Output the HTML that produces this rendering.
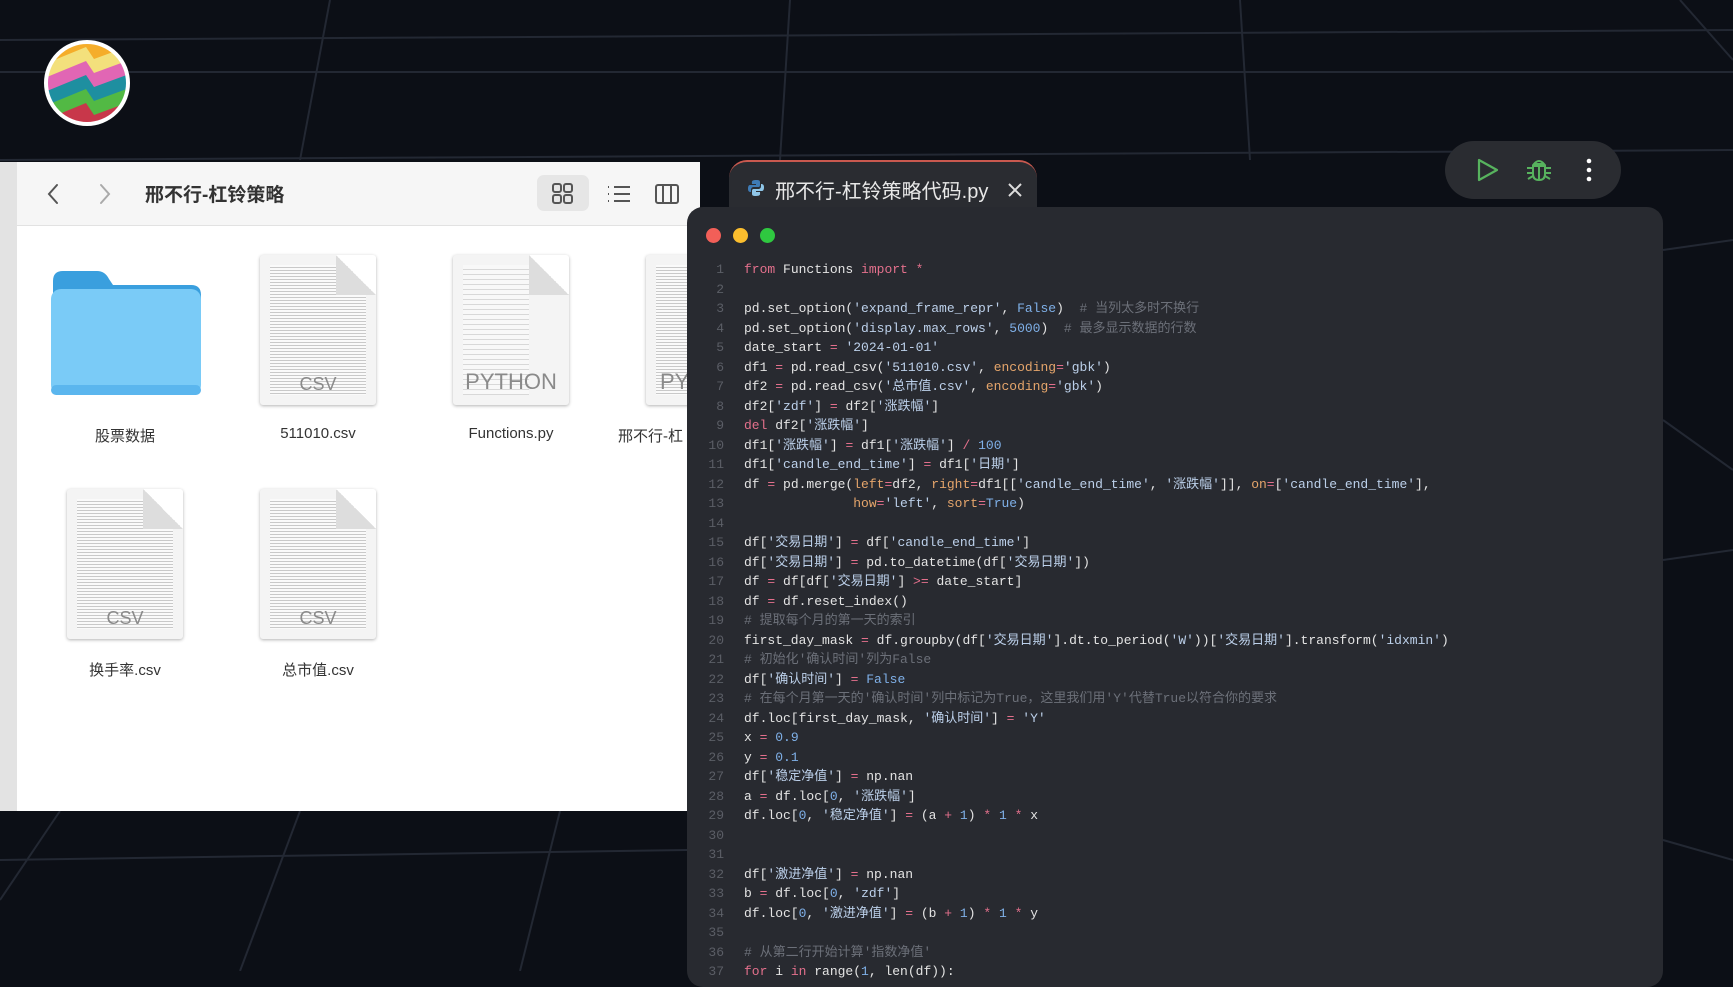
<!DOCTYPE html>
<html><head><meta charset="utf-8">
<style>
*{margin:0;padding:0;box-sizing:border-box}
body{width:1733px;height:971px;overflow:hidden;background:#0c0f16;position:relative;font-family:"Liberation Sans","Noto Sans CJK SC",sans-serif}
.bg{position:absolute;left:0;top:0}
.finder{position:absolute;left:0;top:162px;width:700px;height:649px;background:#fff;overflow:hidden}
.side{position:absolute;left:0;top:0;width:17px;height:100%;background:#e3e3e3}
.tb{position:absolute;left:17px;top:0;right:0;height:64px;background:#f6f6f6;border-bottom:1px solid #e2e2e2}
.tt{position:absolute;left:128px;top:18px;font-size:19px;font-weight:bold;color:#333}
.lbl{position:absolute;font-size:15px;color:#333;text-align:center;width:180px}
.doc{position:absolute;width:116px;height:150px;background:#f4f4f4;border-radius:3px;box-shadow:0 1px 3px rgba(0,0,0,.3);overflow:hidden}
.doc:after{content:"";position:absolute;right:0;top:0;width:40px;height:40px;background:linear-gradient(225deg,#fff 50%,#ddd 50%)}
.doc .lines{position:absolute;left:10px;top:10px;right:10px;bottom:10px;background:repeating-linear-gradient(#fafafa 0 2px,#c9c9c9 2px 3px)}
.doc .ext{position:absolute;bottom:10px;width:100%;text-align:center;font-size:18px;color:#8a8a8a}
.tab{position:absolute;left:729px;top:160px;width:308px;height:60px;background:#2a2c31;border-radius:18px 18px 0 0;border-top:2px solid #c9594f}
.tab span{position:absolute;left:46px;top:13px;font-size:20px;color:#e8e8e8}
.ed{position:absolute;left:687px;top:207px;width:976px;height:780px;background:#282a30;border-radius:16px}
.dot{position:absolute;top:228px;width:15px;height:15px;border-radius:50%}
pre{position:absolute;left:744px;top:260px;font-family:"Liberation Mono","Noto Sans CJK SC",monospace;font-size:13px;line-height:19.5px;color:#e4e4e4}
.ln{position:absolute;left:700px;top:260px;width:24px;text-align:right;font-family:"Liberation Mono",monospace;font-size:13px;line-height:19.5px;color:#5b5e66}
.k{color:#e3708c}.s{color:#bcd0ea}.n{color:#7fb0e8}.o{color:#e3708c}.a{color:#e5a56b}.c{color:#6c7079}
.pill{position:absolute;left:1445px;top:141px;width:176px;height:58px;background:#2a2c31;border-radius:29px}
</style></head><body>
<svg class="bg" width="1733" height="971" stroke="#232833" stroke-width="2" fill="none">
<path d="M0 72 L1733 72"/><path d="M0 160 L1733 150"/><path d="M0 40 L1733 30"/>
<path d="M330 0 L300 160"/><path d="M790 0 L780 160"/><path d="M1240 0 L1250 160"/><path d="M1680 0 L1733 60"/>
<path d="M0 860 L687 850"/><path d="M60 811 L0 900"/><path d="M300 811 L240 971"/><path d="M560 811 L520 971"/>
<path d="M1663 250 L1733 240"/><path d="M1663 560 L1733 550"/><path d="M1663 840 L1733 860"/><path d="M1663 420 L1733 470"/>
</svg>
<svg style="position:absolute;left:42px;top:39px" width="90" height="90" viewBox="0 0 90 90">
<defs><clipPath id="cc"><circle cx="45" cy="44" r="41"/></clipPath></defs>
<g clip-path="url(#cc)">
<rect width="90" height="90" fill="#f5ad2a"/>
<path d="M0 26L44 8L52 20L90 6V90H0Z" fill="#f3e07c"/>
<path d="M0 40L44 22L52 34L90 20V90H0Z" fill="#e166b4"/>
<path d="M0 54L44 36L52 48L90 34V90H0Z" fill="#1e8fa0"/>
<path d="M0 68L44 50L52 62L90 48V90H0Z" fill="#52b944"/>
<path d="M0 82L44 64L52 76L90 62V90H0Z" fill="#c8374a"/>
</g><circle cx="45" cy="44" r="41" fill="none" stroke="#fff" stroke-width="4"/></svg>

<div class="finder">
<div class="side"></div>
<div class="tb">
<svg style="position:absolute;left:27px;top:20px" width="70" height="24" stroke-width="2" fill="none" stroke-linecap="round"><path d="M13 3L5 12L13 21" stroke="#555"/><path d="M57 3L65 12L57 21" stroke="#aaa"/></svg>
<div class="tt">邢不行-杠铃策略</div>
<div style="position:absolute;left:520px;top:13px;width:52px;height:36px;background:#e6e6e6;border-radius:7px"></div>
<svg style="position:absolute;left:535px;top:21px" width="160" height="22" fill="none" stroke="#555" stroke-width="2"><rect x="1" y="1" width="8" height="8" rx="2"/><rect x="12" y="1" width="8" height="8" rx="2"/><rect x="1" y="12" width="8" height="8" rx="2"/><rect x="12" y="12" width="8" height="8" rx="2"/>
<path d="M62 4H78M62 11H78M62 18H78M56 4h1M56 11h1M56 18h1"/><rect x="104" y="2" width="22" height="18" rx="2"/><path d="M111 2V20M119 2V20"/><rect x="155" y="2" width="20" height="14" rx="2"/></svg>
</div>
<svg style="position:absolute;left:49px;top:105px" width="154" height="130"><path d="M4 14Q4 4 14 4H48Q56 4 60 12L64 18H142Q152 18 152 28V40H4Z" fill="#3a9fde"/><rect x="2" y="22" width="150" height="106" rx="10" fill="#7acbf7"/><rect x="2" y="118" width="150" height="10" rx="5" fill="#5bb6ee"/></svg>
<div class="lbl" style="left:35px;top:263px">股票数据</div>
<div class="doc" style="left:260px;top:93px"><div class="lines"></div><div class="ext">CSV</div></div>
<div class="lbl" style="left:228px;top:263px">511010.csv</div>
<div class="doc" style="left:453px;top:93px"><div class="lines" style="background:repeating-linear-gradient(#f8f8f8 0 4px,#d8d8d8 4px 5px);right:40px"></div><div class="ext" style="font-size:22px">PYTHON</div></div>
<div class="lbl" style="left:421px;top:263px">Functions.py</div>
<div class="doc" style="left:646px;top:93px"><div class="lines" style="right:0"></div><div class="ext" style="font-size:22px;text-align:left;padding-left:14px">PY</div></div>
<div class="lbl" style="left:600px;top:263px;text-align:left;padding-left:18px">邢不行-杠</div>
<div class="doc" style="left:67px;top:327px"><div class="lines"></div><div class="ext">CSV</div></div>
<div class="lbl" style="left:35px;top:497px">换手率.csv</div>
<div class="doc" style="left:260px;top:327px"><div class="lines"></div><div class="ext">CSV</div></div>
<div class="lbl" style="left:228px;top:497px">总市值.csv</div>
</div>

<div class="tab"><svg style="position:absolute;left:18px;top:17px" width="18" height="18" viewBox="0 0 18 18"><path d="M9 1C4 1 5 3 5 5H9V6H3C1 6 1 9 1 10C1 13 3 13 4 13V11C4 9 5 8 7 8H11C13 8 13 7 13 5V3C13 1 11 1 9 1Z" fill="#3e7bb6"/><path d="M9 17C14 17 13 15 13 13H9V12H15C17 12 17 9 17 8C17 5 15 5 14 5V7C14 9 13 10 11 10H7C5 10 5 11 5 13V15C5 17 7 17 9 17Z" fill="#8fc6e8"/></svg><span>邢不行-杠铃策略代码.py</span>
<svg style="position:absolute;left:278px;top:20px" width="16" height="16" stroke="#ddd" stroke-width="2"><path d="M2 2L14 14M14 2L2 14"/></svg></div>
<div class="ed"></div>
<div class="dot" style="left:706px;background:#f25f58"></div>
<div class="dot" style="left:733px;background:#fbbe2e"></div>
<div class="dot" style="left:760px;background:#2fc840"></div>
<div class="pill">
<svg style="position:absolute;left:30px;top:16px" width="26" height="26" fill="none" stroke="#57b35e" stroke-width="2.2" stroke-linejoin="round"><path d="M4 3L22 13L4 23Z"/></svg>
<svg style="position:absolute;left:80px;top:15px" width="28" height="28" fill="none" stroke="#57b35e" stroke-width="2"><path d="M9 8Q14 2 19 8Z M8 10H20V18Q20 24 14 24Q8 24 8 18Z M14 10V24M2 12H8M20 12H26M2 17H8M20 17H26M3 23L8 20M25 23L20 20"/></svg>
<svg style="position:absolute;left:140px;top:16px" width="8" height="26" fill="#fff"><circle cx="4" cy="4" r="2.3"/><circle cx="4" cy="13" r="2.3"/><circle cx="4" cy="22" r="2.3"/></svg>
</div>
<div class="ln">1<br>2<br>3<br>4<br>5<br>6<br>7<br>8<br>9<br>10<br>11<br>12<br>13<br>14<br>15<br>16<br>17<br>18<br>19<br>20<br>21<br>22<br>23<br>24<br>25<br>26<br>27<br>28<br>29<br>30<br>31<br>32<br>33<br>34<br>35<br>36<br>37</div>
<pre><span class="k">from</span> Functions <span class="k">import</span> <span class="o">*</span>

pd.set_option(<span class="s">'expand_frame_repr'</span>, <span class="n">False</span>)  <span class="c"># 当列太多时不换行</span>
pd.set_option(<span class="s">'display.max_rows'</span>, <span class="n">5000</span>)  <span class="c"># 最多显示数据的行数</span>
date_start <span class="o">=</span> <span class="s">'2024-01-01'</span>
df1 <span class="o">=</span> pd.read_csv(<span class="s">'511010.csv'</span>, <span class="a">encoding</span><span class="o">=</span><span class="s">'gbk'</span>)
df2 <span class="o">=</span> pd.read_csv(<span class="s">'总市值.csv'</span>, <span class="a">encoding</span><span class="o">=</span><span class="s">'gbk'</span>)
df2[<span class="s">'zdf'</span>] <span class="o">=</span> df2[<span class="s">'涨跌幅'</span>]
<span class="k">del</span> df2[<span class="s">'涨跌幅'</span>]
df1[<span class="s">'涨跌幅'</span>] <span class="o">=</span> df1[<span class="s">'涨跌幅'</span>] <span class="o">/</span> <span class="n">100</span>
df1[<span class="s">'candle_end_time'</span>] <span class="o">=</span> df1[<span class="s">'日期'</span>]
df <span class="o">=</span> pd.merge(<span class="a">left</span><span class="o">=</span>df2, <span class="a">right</span><span class="o">=</span>df1[[<span class="s">'candle_end_time'</span>, <span class="s">'涨跌幅'</span>]], <span class="a">on</span><span class="o">=</span>[<span class="s">'candle_end_time'</span>],
              <span class="a">how</span><span class="o">=</span><span class="s">'left'</span>, <span class="a">sort</span><span class="o">=</span><span class="n">True</span>)

df[<span class="s">'交易日期'</span>] <span class="o">=</span> df[<span class="s">'candle_end_time'</span>]
df[<span class="s">'交易日期'</span>] <span class="o">=</span> pd.to_datetime(df[<span class="s">'交易日期'</span>])
df <span class="o">=</span> df[df[<span class="s">'交易日期'</span>] <span class="o">&gt;=</span> date_start]
df <span class="o">=</span> df.reset_index()
<span class="c"># 提取每个月的第一天的索引</span>
first_day_mask <span class="o">=</span> df.groupby(df[<span class="s">'交易日期'</span>].dt.to_period(<span class="s">'W'</span>))[<span class="s">'交易日期'</span>].transform(<span class="s">'idxmin'</span>)
<span class="c"># 初始化'确认时间'列为False</span>
df[<span class="s">'确认时间'</span>] <span class="o">=</span> <span class="n">False</span>
<span class="c"># 在每个月第一天的'确认时间'列中标记为True，这里我们用'Y'代替True以符合你的要求</span>
df.loc[first_day_mask, <span class="s">'确认时间'</span>] <span class="o">=</span> <span class="s">'Y'</span>
x <span class="o">=</span> <span class="n">0.9</span>
y <span class="o">=</span> <span class="n">0.1</span>
df[<span class="s">'稳定净值'</span>] <span class="o">=</span> np.nan
a <span class="o">=</span> df.loc[<span class="n">0</span>, <span class="s">'涨跌幅'</span>]
df.loc[<span class="n">0</span>, <span class="s">'稳定净值'</span>] <span class="o">=</span> (a <span class="o">+</span> <span class="n">1</span>) <span class="o">*</span> <span class="n">1</span> <span class="o">*</span> x


df[<span class="s">'激进净值'</span>] <span class="o">=</span> np.nan
b <span class="o">=</span> df.loc[<span class="n">0</span>, <span class="s">'zdf'</span>]
df.loc[<span class="n">0</span>, <span class="s">'激进净值'</span>] <span class="o">=</span> (b <span class="o">+</span> <span class="n">1</span>) <span class="o">*</span> <span class="n">1</span> <span class="o">*</span> y

<span class="c"># 从第二行开始计算'指数净值'</span>
<span class="k">for</span> i <span class="k">in</span> range(<span class="n">1</span>, len(df)):</pre>
</body></html>
